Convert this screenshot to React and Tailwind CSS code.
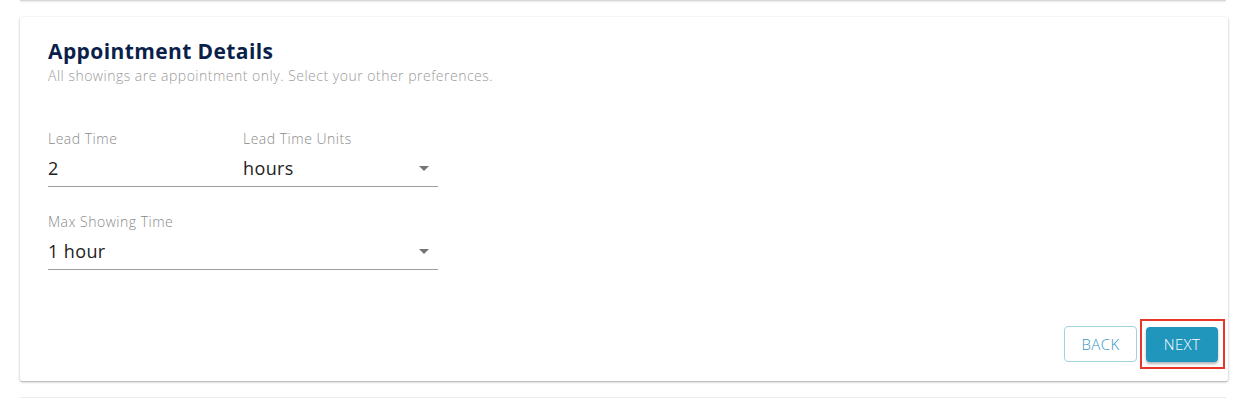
import React from 'react';

const Caret = () => (
    <svg width="10" height="5" viewBox="0 0 10 5" className="fill-[#757575]">
        <path d="M0 0 L10 0 L5 5 Z" />
    </svg>
);

const SelectField = ({ label, value, className = '' }) => (
    <div className={`flex flex-col ${className}`}>
        <span className="text-[14px] font-light text-[#8a8a8a] leading-4 tracking-[0.5px]">{label}</span>
        <div className="flex items-center justify-between mt-[11px] h-[20px]">
            <span className="text-[18px] text-[#222] leading-5 tracking-[0.4px]">{value}</span>
            <span className="mr-[9px]"><Caret /></span>
        </div>
    </div>
);

const App = () => {
    return (
        <div className="w-[1246px] h-[400px] bg-white overflow-hidden font-['Open_Sans',sans-serif]">
            {/* tail of the previous card */}
            <div className="mx-[20px] h-[1px] bg-[#d6d6d6] shadow-[0_1px_2px_rgba(0,0,0,0.12)]"></div>

            <div className="ml-[20px] mr-[18px] mt-[16px] h-[364px] bg-white shadow-[0_1px_3px_rgba(0,0,0,0.25),0_1px_1px_rgba(0,0,0,0.12)] rounded-[2px] flex flex-col pl-[28px] pr-[3px] pt-[20px] pb-[12px]">
                <h2 className="text-[21px] font-bold text-[#0b1f4b] leading-[29px] tracking-[0.4px]">Appointment Details</h2>
                <p className="text-[14px] font-light text-[#9a9a9a] leading-[19px] tracking-[0.5px]">
                    All showings are appointment only. Select your other preferences.
                </p>

                <div className="mt-[46px] w-[390px] flex border-b border-[#9e9e9e] pb-[8px]">
                    <div className="w-[195px] flex flex-col">
                        <span className="text-[14px] font-light text-[#8a8a8a] leading-4 tracking-[0.5px]">Lead Time</span>
                        <span className="text-[18px] text-[#222] leading-5 mt-[11px]">2</span>
                    </div>
                    <SelectField label="Lead Time Units" value="hours" className="flex-1" />
                </div>

                <div className="mt-[27px] w-[390px] border-b border-[#9e9e9e] pb-[8px]">
                    <SelectField label="Max Showing Time" value="1 hour" />
                </div>

                <div className="mt-auto flex justify-end items-center gap-[3px]">
                    <button className="w-[73px] h-[36px] rounded-[4px] border border-[#9fd2e2] text-[#3596bb] text-[15px] font-light tracking-[0.4px]">
                        BACK
                    </button>
                    <div className="border-2 border-[#e8362a] pl-[4px] pr-[5px] pt-[6px] pb-[5px]">
                        <button className="w-[72px] h-[35px] rounded-[4px] bg-[#2096bd] text-white text-[15px] font-light tracking-[0.4px] shadow-[0_2px_3px_rgba(0,0,0,0.3)]">
                            NEXT
                        </button>
                    </div>
                </div>
            </div>

            <div className="mx-[20px] mt-[16px] h-[4px] border-t border-[#ececec]"></div>
        </div>
    );
};

export default App;
